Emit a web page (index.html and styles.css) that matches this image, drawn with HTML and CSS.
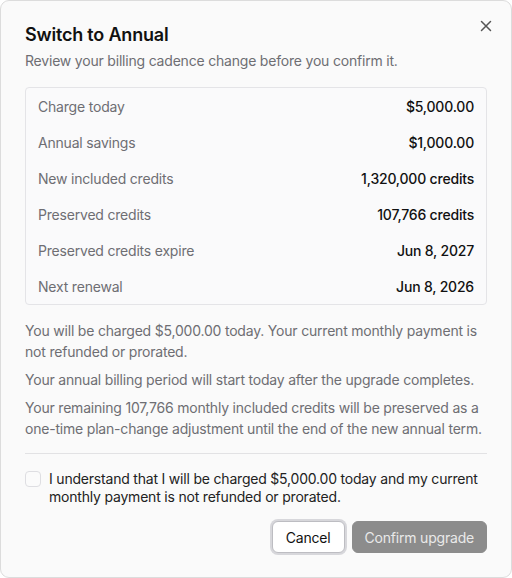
FILE: index.html
```html
<!DOCTYPE html>
<html lang="en">
<head>
<meta charset="utf-8">
<title>Switch to Annual</title>
<link rel="stylesheet" href="styles.css">
</head>
<body>
<div class="dialog" role="dialog" aria-labelledby="dlg-title">
  <button class="close" aria-label="Close">
    <svg width="12" height="12" viewBox="0 0 12 12" fill="none" stroke="currentColor" stroke-width="1.5" stroke-linecap="round"><path d="M1.5 1.5l9 9M10.5 1.5l-9 9"/></svg>
  </button>
  <h2 class="title" id="dlg-title">Switch to Annual</h2>
  <p class="subtitle">Review your billing cadence change before you confirm it.</p>

  <dl class="summary">
    <div class="row"><dt>Charge today</dt><dd>$5,000.00</dd></div>
    <div class="row"><dt>Annual savings</dt><dd>$1,000.00</dd></div>
    <div class="row"><dt>New included credits</dt><dd>1,320,000 credits</dd></div>
    <div class="row"><dt>Preserved credits</dt><dd>107,766 credits</dd></div>
    <div class="row"><dt>Preserved credits expire</dt><dd>Jun 8, 2027</dd></div>
    <div class="row"><dt>Next renewal</dt><dd>Jun 8, 2026</dd></div>
  </dl>

  <div class="notes">
    <p>You will be charged $5,000.00 today. Your current monthly payment is not refunded or prorated.</p>
    <p>Your annual billing period will start today after the upgrade completes.</p>
    <p>Your remaining 107,766 monthly included credits will be preserved as a one-time plan-change adjustment until the end of the new annual term.</p>
  </div>

  <hr class="divider">

  <label class="ack">
    <input type="checkbox" class="ack-box">
    <span>I understand that I will be charged $5,000.00 today and my current monthly payment is not refunded or prorated.</span>
  </label>

  <div class="actions">
    <button class="btn btn-cancel">Cancel</button>
    <button class="btn btn-confirm" disabled>Confirm upgrade</button>
  </div>
</div>
</body>
</html>
```

FILE: styles.css
```css
* { box-sizing: border-box; }

html, body {
  margin: 0;
  padding: 0;
  background: #ffffff;
}

body {
  font-family: Inter, "Noto Sans", sans-serif;
  color: #1a1a1a;
  letter-spacing: -0.2px;
  -webkit-font-smoothing: antialiased;
}

.dialog {
  position: relative;
  width: 512px;
  height: 578px;
  background: #fafafa;
  border: 1px solid #dcdcdc;
  border-radius: 9px;
  padding: 21px 24px 24px 24px;
}

.close {
  position: absolute;
  top: 18px;
  right: 18px;
  width: 14px;
  height: 14px;
  padding: 0;
  border: 0;
  background: none;
  color: #555;
  display: flex;
  align-items: center;
  justify-content: center;
}

.title {
  margin: 0;
  font-size: 18px;
  font-weight: 600;
  line-height: 26px;
  letter-spacing: -0.2px;
  color: #111;
}

.subtitle {
  margin: 3px 0 0;
  font-size: 14px;
  line-height: 20px;
  color: #6e6e73;
}

.summary {
  margin: 16px 0 0;
  border: 1px solid #e4e4e7;
  border-radius: 4px;
  background: #fafafb;
}

.row {
  display: flex;
  justify-content: space-between;
  align-items: center;
  height: 36px;
  padding: 0 12px;
}

.row dt {
  font-size: 14px;
  color: #6e6e73;
}

.row dd {
  margin: 0;
  font-size: 14px;
  font-weight: 500;
  color: #111;
}

.notes {
  margin-top: 15px;
  display: flex;
  flex-direction: column;
  gap: 7px;
}

.notes p {
  margin: 0;
  font-size: 14px;
  line-height: 21px;
  color: #6e6e73;
}

.divider {
  margin: 14px 0 0;
  border: 0;
  border-top: 1px solid #e2e2e4;
}

.ack {
  display: flex;
  align-items: flex-start;
  gap: 8px;
  margin-top: 16px;
  font-size: 14px;
  line-height: 18px;
  color: #222;
}

.ack-box {
  appearance: none;
  -webkit-appearance: none;
  flex: none;
  width: 16px;
  height: 16px;
  margin: 1px 0 0;
  border: 1px solid #dedee2;
  border-radius: 4px;
  background: #fbfbfb;
}

.actions {
  display: flex;
  justify-content: flex-end;
  gap: 7px;
  margin-top: 15px;
}

.btn {
  height: 32px;
  font-family: inherit;
  font-size: 14px;
  letter-spacing: -0.2px;
  border-radius: 6px;
  padding: 0 12px;
}

.btn-cancel {
  background: #ffffff;
  color: #111;
  border: 1px solid #bdbdc2;
  box-shadow: 0 0 0 2px #d7d7db;
  padding: 0 13px;
}

.btn-confirm {
  background: #8c8c8c;
  color: #e9e9e9;
  border: 1px solid #8c8c8c;
}
```
